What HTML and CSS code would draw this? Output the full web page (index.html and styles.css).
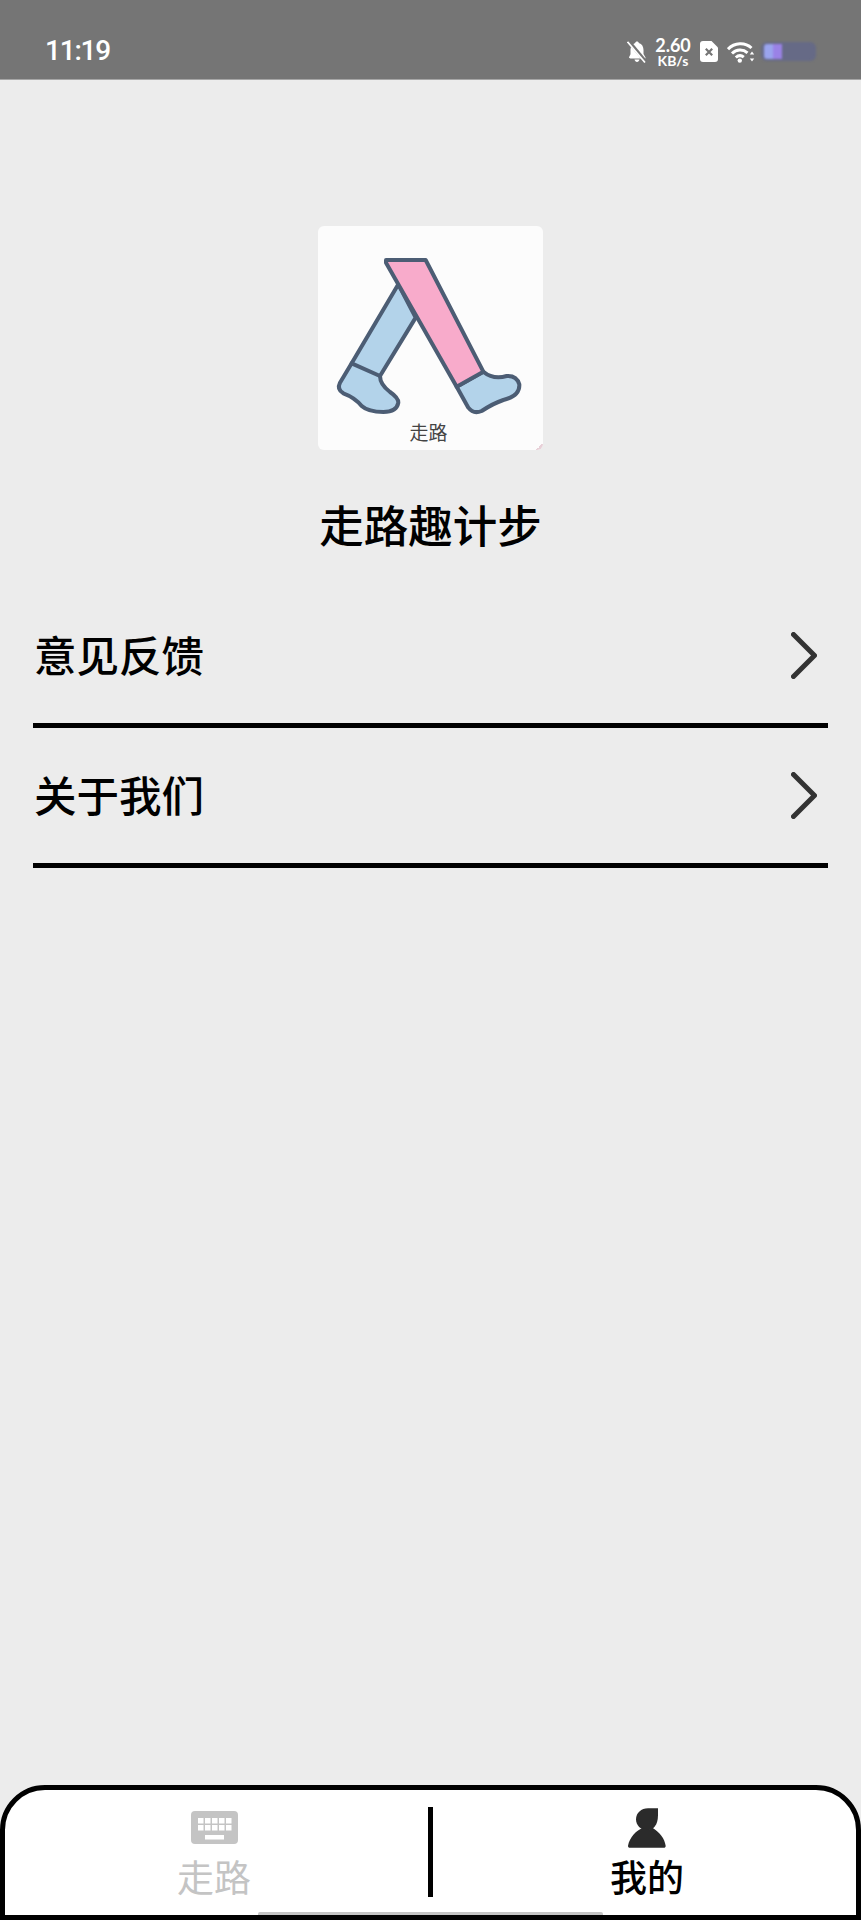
FILE: index.html
```html
<!DOCTYPE html>
<html lang="zh-CN">
<head>
<meta charset="utf-8">
<title>走路趣计步</title>
<link rel="stylesheet" href="styles.css">
</head>
<body>
<div class="app">
  <header class="status">
    <span class="time">11:19</span>
    <div class="status-icons">
      <svg class="ic-bell" viewBox="0 0 20 23" aria-hidden="true">
        <path d="M10 1.500c1 0 1.600.6 1.800 1.400C15 3.800 16.500 6.600 16.500 10v4l2 3.500v1H3.500c-.8 0-1.500-.6-1.500-1.200l1.500-3V9.500C3.500 6.500 5.500 3.700 8.200 2.900 8.400 2.100 9 1.500 10 1.500Z" fill="#fff"/>
        <path d="M7.500 19.500h5c-.3 1.500-1.300 2.500-2.500 2.500s-2.200-1-2.500-2.500Z" fill="#fff"/>
        <path d="M1.500 1 19 22" stroke="#757575" stroke-width="3.600"/>
        <path d="M.5 1.800 18 22.500" stroke="#fff" stroke-width="1.700"/>
      </svg>
      <div class="speed">2.60<br>KB/s</div>
      <svg class="ic-sim" viewBox="0 0 18 21" aria-hidden="true">
        <path d="M3 0h8.500L18 6.500V18a3 3 0 0 1-3 3H3a3 3 0 0 1-3-3V3a3 3 0 0 1 3-3Z" fill="#fff"/>
        <path d="M5.800 7.800l6.400 6.400M12.200 7.800l-6.400 6.400" stroke="#757575" stroke-width="2.200"/>
      </svg>
      <svg class="ic-wifi" viewBox="0 0 28 22" aria-hidden="true">
        <g fill="none" stroke="#fff" stroke-width="3">
          <path d="M1 8.200C7.500 1.500 18 1 24.500 7"/>
          <path d="M5 12.500c4.500-4.500 11-4.700 15.500-.7"/>
          <path d="M8.800 16.500c2.400-2.200 5.600-2.300 8-.4"/>
        </g>
        <circle cx="12.800" cy="19.600" r="2.200" fill="#fff"/>
        <path d="M25 10.500l2.200 3h-4.400ZM25 20.500l-2.200-3h4.400Z" fill="#fff"/>
      </svg>
      <div class="battery"><span class="cell-a"></span><span class="cell-b"></span></div>
    </div>
  </header>

  <main class="content">
    <div class="logo">
      <svg class="logo-art" viewBox="55 50 670 570" aria-hidden="true">
        <g stroke="#4c5d74" stroke-width="12" stroke-linejoin="round" stroke-linecap="round">
          <path fill="#b3d3ea" d="M295 225 155 462 120 520Q110 540 130 552 165 565 185 590 205 608 250 608 290 608 295 580 295 565 270 548 240 525 240 500L347 325Z"/>
          <path fill="none" d="M155 462 240 500"/>
          <path fill="#b3d3ea" d="M470 532 505 595Q520 615 545 605 580 582 610 572 660 560 658 525 650 498 620 500 580 512 550 487Z"/>
          <path fill="#f8abcb" d="M258 152H377L550 487 470 532 258 160Z"/>
        </g>
      </svg>
      <span class="logo-label">走路</span>
      <span class="logo-corner"></span>
    </div>
    <h1 class="title">走路趣计步</h1>
    <ul class="menu">
      <li class="menu-row">
        <span class="menu-text">意见反馈</span>
        <svg class="chevron" viewBox="0 0 26 47" aria-hidden="true"><path d="M2.500 2.500 23.500 23.500 2.500 44.500" fill="none" stroke="#333" stroke-width="5" stroke-linecap="round" stroke-linejoin="round"/></svg>
      </li>
      <li class="menu-row">
        <span class="menu-text">关于我们</span>
        <svg class="chevron" viewBox="0 0 26 47" aria-hidden="true"><path d="M2.500 2.500 23.500 23.500 2.500 44.500" fill="none" stroke="#333" stroke-width="5" stroke-linecap="round" stroke-linejoin="round"/></svg>
      </li>
    </ul>
  </main>

  <nav class="tabbar">
    <div class="tab tab-off">
      <svg class="ic-keyboard" viewBox="0 0 47 33" aria-hidden="true">
        <rect width="47" height="33" rx="4" fill="#c4c4c4"/>
        <g fill="#fff">
          <rect x="7" y="7" width="5.500" height="5.500"/><rect x="14" y="7" width="5.500" height="5.500"/><rect x="21" y="7" width="5.500" height="5.500"/><rect x="28" y="7" width="5.500" height="5.500"/><rect x="35" y="7" width="5.500" height="5.500"/>
          <rect x="7" y="14" width="5.500" height="5.500"/><rect x="14" y="14" width="5.500" height="5.500"/><rect x="21" y="14" width="5.500" height="5.500"/><rect x="28" y="14" width="5.500" height="5.500"/><rect x="35" y="14" width="5.500" height="5.500"/>
          <rect x="14" y="24" width="19" height="4.500"/>
        </g>
      </svg>
      <span class="tab-text">走路</span>
    </div>
    <div class="tab-divider"></div>
    <div class="tab tab-on">
      <svg class="ic-person" viewBox="595 113 114 120" aria-hidden="true">
        <path fill="#2b2b2b" d="M655 114H685V135C685 165 670 180 652 180 633 180 619 165 619 147 619 128 635 114 655 114Z"/>
        <path fill="#2b2b2b" d="M595 226C600 200 620 180 640 172 650 178 660 178 668 172 690 185 705 205 708 226 708 230 706 232 702 232H601C597 232 595 230 595 226Z"/>
      </svg>
      <span class="tab-text">我的</span>
    </div>
    <span class="home-bar"></span>
  </nav>
</div>
</body>
</html>
```
FILE: styles.css
```css
* { box-sizing: border-box; }
html, body { margin: 0; padding: 0; }
body {
  background: #ececec;
  font-family: "Noto Sans CJK SC", "Noto Sans", sans-serif;
  color: #000;
}
.app {
  display: flex;
  flex-direction: column;
  width: 861px;
  height: 1920px;
  overflow: hidden;
}

/* status bar */
.status {
  flex: 0 0 80px;
  height: 80px;
  background: #757575;
  border-bottom: 1px solid #a6a6a6;
  display: flex;
  align-items: flex-start;
  justify-content: space-between;
  padding: 0 45px 0 45px;
  color: #fff;
}
.time {
  font-family: Roboto, sans-serif;
  font-size: 28px;
  font-weight: 500;
  line-height: 32px;
  margin-top: 35px;
  letter-spacing: -1.200px;
}
.status-icons {
  display: flex;
  align-items: flex-start;
  margin-top: 38px;
}
.ic-bell { width: 20px; height: 23px; margin-top: 2px; }
.speed {
  width: 38px;
  margin-left: 7px;
  margin-top: -1px;
  font-family: "Lato", sans-serif;
  font-weight: 700;
  font-size: 14px;
  line-height: 13px;
  text-align: center;
}
.speed::first-line { font-size: 18px; line-height: 17px; }
.ic-sim { width: 18px; height: 21px; margin: 3px 0 0 8px; }
.ic-wifi { width: 28px; height: 22px; margin: 3px 0 0 9px; }
.battery {
  display: flex;
  width: 55px;
  height: 19px;
  margin: 4px 0 0 6px;
  padding: 2px 0 2px 3px;
  border-radius: 6px;
  background: #666a86;
  filter: blur(1.2px);
}
.cell-a { width: 9px; background: #9aa4ee; border-radius: 3px 0 0 3px; }
.cell-b { width: 9px; background: #9a82e6; }

/* main */
.content {
  flex: 1 1 auto;
  display: flex;
  flex-direction: column;
  align-items: center;
  padding-top: 146px;
}
.logo {
  position: relative;
  display: flex;
  flex-direction: column;
  align-items: center;
  width: 225px;
  height: 224px;
  margin-right: 1px;
  background: #fcfcfc;
  border-radius: 6px;
  overflow: hidden;
}
.logo-art { width: 224px; height: 190px; flex: none; }
.logo-label {
  margin: 5px 3px 0 0;
  font-size: 19px;
  line-height: 22px;
  color: #444;
}
.logo-corner {
  position: absolute;
  right: 0;
  bottom: 0;
  width: 7px;
  height: 7px;
  background: linear-gradient(135deg, transparent 50%, #e8d0d8 50%);
}
.title {
  margin: 44px 0 34px;
  font-size: 44.500px;
  font-weight: 500;
  line-height: 60px;
}
.menu {
  list-style: none;
  width: 795px;
  margin: 0;
  padding: 0;
}
.menu-row {
  display: flex;
  align-items: center;
  justify-content: space-between;
  height: 140px;
  border-bottom: 5px solid #000;
  padding: 0 11px 0 1px;
}
.menu-text {
  font-size: 42.500px;
  font-weight: 500;
  line-height: 56px;
  padding-bottom: 4px;
}
.chevron { width: 26px; height: 47px; flex: none; }

/* tab bar */
.tabbar {
  position: relative;
  flex: 0 0 135px;
  height: 135px;
  display: flex;
  background: #fff;
  border: 5px solid #000;
  border-radius: 45px 45px 0 0;
  padding-top: 17px;
}
.tab {
  flex: 1 1 0;
  display: flex;
  flex-direction: column;
  align-items: center;
}
.tab-off { color: #c4c4c4; padding: 4px 5px 0 0; }
.tab-on { color: #000; padding-left: 5px; }
.tab-text {
  font-size: 37px;
  font-weight: 400;
  line-height: 50px;
  margin-top: 7px;
}
.tab-on .tab-text { margin-top: 3px; font-weight: 500; }
.ic-keyboard { width: 47px; height: 33px; }
.ic-person { width: 38px; height: 40px; margin-top: 1px; }
.tab-divider {
  flex: none;
  width: 5px;
  height: 90px;
  background: #000;
}
.home-bar {
  position: absolute;
  left: 253px;
  bottom: 0;
  width: 345px;
  height: 3px;
  background: #c4c4c4;
  border-radius: 2px 2px 0 0;
}
```
